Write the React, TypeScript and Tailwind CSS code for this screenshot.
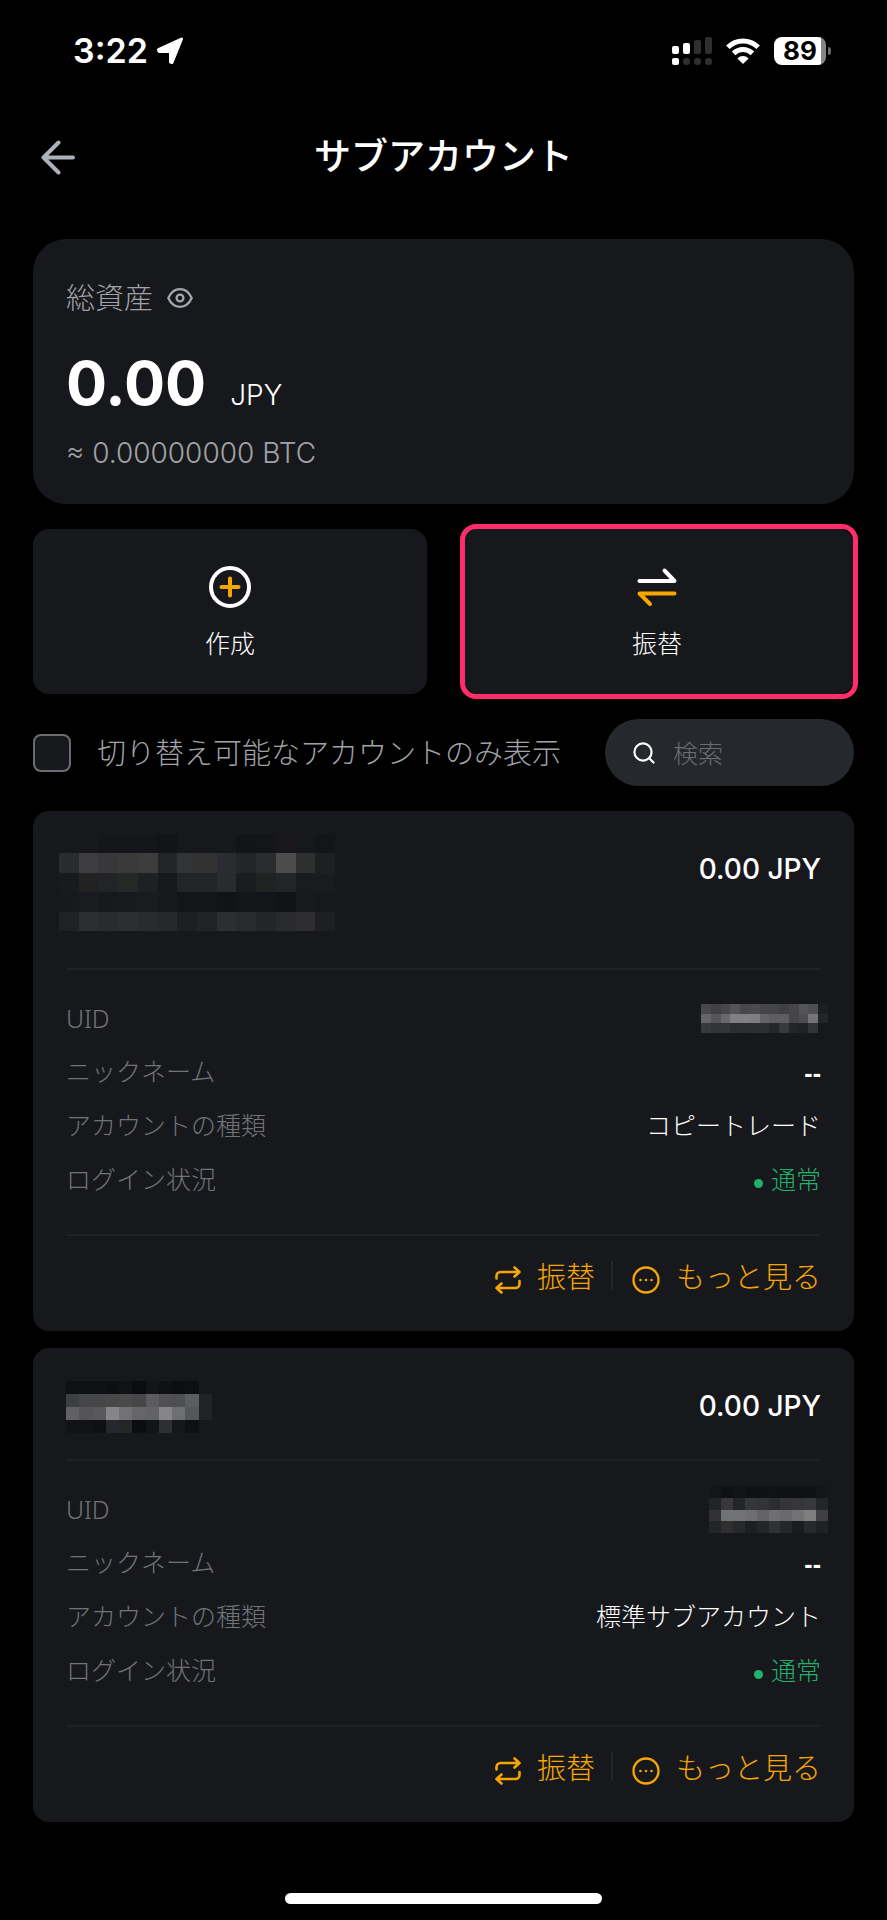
import { useState } from 'react'

type Row = (string | null)[]

// Hidden values, one colour per block
const NAME_LARGE: Row[] = [
  [null, null, '#15161a', '#15161a', '#15161a', '#131418', null, null, null, '#131418', '#141519', '#1a171b', null, '#141519'],
  ['#2a2b2e', '#3e3e40', '#38383a', '#3a3a3b', '#3d3d3e', '#242528', '#323335', '#323232', '#2b2c2f', '#242528', '#2b2c2f', '#4c4c4d', '#2e2f2f', '#1e1f22'],
  ['#191a1d', '#222222', '#232427', '#262727', '#1f2023', '#17181b', '#232427', '#232427', '#2a2b2e', '#1b1c1f', '#212222', '#242528', '#1a1b1e', '#1a1b1e'],
  ['#18191c', '#1a1b1e', '#18191b', '#191a1c', '#1a1b1e', '#18191c', '#141519', '#141519', '#121317', '#151619', '#151619', '#121317', '#191a1d', null],
  ['#202124', '#2c2d30', '#2a2b2e', '#2c2d30', '#2a2b2e', '#27282b', '#1e1f22', '#222326', '#2d2e31', '#292a2d', '#242528', '#292a2d', '#2e2e31', '#1e1f22'],
]

const UID_WIDE: Row[] = [
  ['#48484a', '#414143', '#48484b', '#535456', '#48484b', '#4b4b4e', '#444547', '#444547', '#3f4042', '#464648', '#545557', '#4e4f50', '#1c1d1f'],
  ['#656567', '#555557', '#6a6a6c', '#808082', '#808082', '#7e7e80', '#656567', '#5e5e60', '#5e5e60', '#454547', '#4e4e50', '#747476', '#242528'],
  ['#38393b', '#323336', '#343538', '#2c2d2f', '#2c2d2f', '#2d2e30', '#2d2e30', '#262729', '#38393b', '#242528', '#212224', '#323335', null],
]

const NAME_SMALL: Row[] = [
  ['#101115', '#101115', '#101115', '#0e0f13', '#111216', '#0b0c10', '#141519', '#101115', '#0d0e12', '#0e0f13', null],
  ['#3d3e41', '#454649', '#464648', '#484849', '#4a4a4b', '#464648', '#5c5c5e', '#505052', '#4e4f51', '#5c5d5f', '#222324'],
  ['#616163', '#555557', '#59595b', '#868688', '#717274', '#666668', '#626365', '#868688', '#6e6f71', '#555658', '#222324'],
  ['#121317', '#121317', '#0f1014', '#27282b', '#252626', '#0c0d11', '#141519', '#2e2f32', '#16171b', '#0f1014', null],
]

const UID_SMALL: Row[] = [
  ['#141519', '#101115', '#131418', '#101115', '#101115', '#111216', '#101115', '#101115', '#101115', '#141519'],
  ['#222326', '#38383b', '#242528', '#353638', '#333435', '#2c2d30', '#353538', '#363638', '#38393a', '#242528'],
  ['#323234', '#717274', '#717274', '#6f6f71', '#646466', '#6f6f71', '#6a6a6c', '#717274', '#7f7f80', '#404042'],
  ['#232427', '#302f30', '#27282a', '#1d1e21', '#242528', '#303134', '#252629', '#1a1b1e', '#28292c', '#202124'],
]

const ACCOUNTS = [
  { id: 'copy', name: NAME_LARGE, uid: UID_WIDE, type: 'コピートレード' },
  { id: 'standard', name: NAME_SMALL, uid: UID_SMALL, type: '標準サブアカウント' },
]

const Mosaic: React.FC<{ rows: Row[]; className: string }> = ({ rows, className }) => (
  <svg
    className={className}
    viewBox={`0 0 ${rows[0].length} ${rows.length}`}
    preserveAspectRatio="none"
    shapeRendering="crispEdges"
    aria-hidden="true"
  >
    {rows.map((row, y) =>
      row.map((fill, x) => fill && <rect key={`${x}-${y}`} x={x} y={y} width="1" height="1" fill={fill} />)
    )}
  </svg>
)

const StatusBar = () => (
  <div className="flex h-[102px] items-center justify-between pr-[56px] pl-[73px] font-['Inter','Liberation_Sans',sans-serif]">
    <div className="flex items-center gap-[8px] text-[34px] leading-[40px] font-semibold">
      3:22
      <svg className="size-[28px]" viewBox="0 0 28 28" fill="#fff" stroke="#fff" strokeWidth="3" strokeLinejoin="round">
        <path d="M25.500 2 2.500 12.500 3 14.500H14.500V25L16 25.500Z" />
      </svg>
    </div>
    <div className="flex items-center">
      <svg className="h-[28px] w-[40px]" viewBox="0 0 40 28">
        <g fill="#fff">
          <rect x="0" y="9" width="7" height="8" rx="2" />
          <rect x="11" y="6" width="7" height="11" rx="2" />
          <rect x="0" y="21" width="7" height="7" rx="2" />
        </g>
        <g fill="#2f2f2f">
          <rect x="22" y="3" width="7" height="14" rx="2" />
          <rect x="33" y="0" width="7" height="17" rx="2" />
          <rect x="11" y="21" width="7" height="7" rx="3" />
          <rect x="22" y="21" width="7" height="7" rx="3" />
          <rect x="33" y="21" width="7" height="7" rx="3" />
        </g>
      </svg>
      <svg className="ml-[14px] h-[26px] w-[34px]" viewBox="0 0 34 26" fill="none" stroke="#fff" strokeWidth="5">
        <path d="M1.800 9.300A21.500 21.500 0 0 1 32.200 9.300" />
        <path d="M7.600 15.400A13.500 13.500 0 0 1 26.400 15.400" />
        <path d="M11.400 20.400A8 8 0 0 1 22.600 20.400L17 26Z" fill="#fff" stroke="none" />
      </svg>
      <div className="ml-[14px] flex h-[28px] w-[52px] items-center justify-center rounded-[8px] bg-[linear-gradient(90deg,#fff_90%,#868686_90%)] text-[26px] leading-[28px] font-bold text-black">
        89
      </div>
      <div className="ml-[2px] h-[8px] w-[3px] rounded-r-full bg-[#6d6d6d]" />
    </div>
  </div>
)

const EyeIcon = () => (
  <svg className="h-[20px] w-[26px]" viewBox="0 0 26 20" fill="none" stroke="#a3a7b0" strokeWidth="2.300">
    <path d="M1.300 10C4 4.200 8 1.200 13 1.200S22 4.200 24.700 10C22 15.800 18 18.800 13 18.800S4 15.800 1.300 10Z" strokeLinejoin="round" />
    <circle cx="13" cy="10" r="3.400" />
  </svg>
)

const CreateIcon = () => (
  <svg className="size-[42px]" viewBox="0 0 42 42" fill="none" strokeWidth="4" strokeLinecap="round">
    <circle cx="21" cy="21" r="19" stroke="#fff" />
    <path d="M21 12.500V29.500M12.500 21H29.500" stroke="#f7a600" />
  </svg>
)

const TransferIcon = () => (
  <svg className="size-[42px]" viewBox="0 0 42 42" fill="none" strokeWidth="4" strokeLinecap="round" strokeLinejoin="round">
    <path d="M3.500 15H38.500L28.500 4.500" stroke="#fff" />
    <path d="M38.500 27.500H3.500L14 38" stroke="#f7a600" />
  </svg>
)

const SwapIcon = () => (
  <svg className="mt-[6px] h-[28px] w-[26px]" viewBox="0 0 26 28" fill="none" stroke="#f7a600" strokeWidth="2.600" strokeLinecap="round" strokeLinejoin="round">
    <path d="M1.500 12.500V10A4 4 0 0 1 5.500 6H24.500M19.500 1.500 24.500 6 19.500 10.500" />
    <path d="M24.500 15V18A4 4 0 0 1 20.500 22H1.500M6.500 17.500 1.500 22 6.500 26.500" />
  </svg>
)

const MoreIcon = () => (
  <svg className="mt-[6px] size-[28px]" viewBox="0 0 28 28" fill="none" stroke="#f7a600" strokeWidth="2.300">
    <circle cx="14" cy="14" r="12.500" />
    <g fill="#f7a600" stroke="none">
      <circle cx="8.500" cy="14" r="1.300" />
      <circle cx="14" cy="14" r="1.300" />
      <circle cx="19.500" cy="14" r="1.300" />
    </g>
  </svg>
)

const AccountCard: React.FC<{ account: (typeof ACCOUNTS)[number] }> = ({ account }) => {
  const large = account.id === 'copy'
  return (
    <article className="rounded-[16px] bg-[#17181c] px-[33px]">
      <header
        className={`flex justify-between border-b-2 border-[#202125] ${large ? 'h-[159px]' : 'h-[113px]'}`}
      >
        <Mosaic
          rows={account.name}
          className={large ? '-ml-[7px] mt-[23px] h-[97px] w-[276px]' : 'mt-[33px] h-[52px] w-[146px]'}
        />
        <span className="mt-[38px] font-['Inter'] text-[28px] leading-[40px] font-medium">0.00 JPY</span>
      </header>

      <dl className="pt-[23px] pb-[28px] text-[25px] leading-[54px] text-[#727377]">
        <div className="flex items-center justify-between leading-[51px]">
          <dt>UID</dt>
          <dd>
            <Mosaic
              rows={account.uid}
              className={large ? '-mr-[7px] h-[29px] w-[127px]' : '-mr-[7px] h-[47px] w-[119px]'}
            />
          </dd>
        </div>
        <div className="flex h-[54px] justify-between">
          <dt>ニックネーム</dt>
          <dd className="pt-[2px] font-['Liberation_Sans'] font-bold text-white">--</dd>
        </div>
        <div className="flex justify-between">
          <dt>アカウントの種類</dt>
          <dd className="text-white">{account.type}</dd>
        </div>
        <div className="flex justify-between">
          <dt>ログイン状況</dt>
          <dd className="flex items-center gap-[8px] text-[#20b26c]">
            <span className="mt-[8px] size-[9px] rounded-full bg-[#20b26c]" />
            通常
          </dd>
        </div>
      </dl>

      <footer className="flex h-[97px] items-start justify-end border-t-2 border-[#202125] pt-[19px] text-[29px] leading-[44px] text-[#f7a600]">
        <button className="flex items-center gap-[16px]">
          <SwapIcon />
          振替
        </button>
        <span className="mt-[6px] ml-[16px] h-[29px] w-[2px] bg-[#25262a]" />
        <button className="ml-[19px] flex items-center gap-[16px]">
          <MoreIcon />
          もっと見る
        </button>
      </footer>
    </article>
  )
}

export default function App() {
  const [onlySwitchable, setOnlySwitchable] = useState(false)
  const [query, setQuery] = useState('')

  return (
    <div
      lang="ja"
      className="flex min-h-screen flex-col bg-black font-['Noto_Sans','Noto_Sans_CJK_JP',sans-serif] font-light text-white"
    >
      <StatusBar />

      <header className="grid h-[112px] grid-cols-[1fr_auto_1fr] items-center px-[40px]">
        <button aria-label="戻る" className="w-[36px]">
          <svg className="size-[36px]" viewBox="0 0 36 36" fill="none" stroke="#adb1b8" strokeWidth="4" strokeLinecap="round" strokeLinejoin="round">
            <path d="M18.500 2.500 3.500 17.500 18.500 32.500M3.500 17.500H33" />
          </svg>
        </button>
        <h1 className="pb-[8px] font-['Noto_Sans_CJK_JP'] text-[37px] leading-[48px] font-medium">サブアカウント</h1>
      </header>

      <main className="flex flex-1 flex-col gap-[25px] px-[33px] pt-[25px]">
        <section className="rounded-[33px] bg-[#17181c] px-[33px] pt-[37px] pb-[31px]">
          <div className="flex items-center gap-[14px] text-[29px] leading-[44px] text-[#a1a2a7]">
            総資産
            <EyeIcon />
          </div>
          <div className="mt-[23px] flex items-baseline gap-[24px] font-['Inter']">
            <span className="text-[61px] leading-[80px] font-bold">0.00</span>
            <span className="text-[28px] leading-[40px]">JPY</span>
          </div>
          <div className="mt-[10px] font-['Inter'] text-[28px] leading-[40px] text-[#a1a2a7]">≈ 0.00000000 BTC</div>
        </section>

        <section className="grid grid-cols-2 gap-[33px] text-[25px] leading-[36px]">
          <button className="flex h-[165px] flex-col items-center gap-[17px] rounded-[16px] bg-[#17181c] pt-[37px]">
            <CreateIcon />
            作成
          </button>
          <button className="relative flex h-[165px] flex-col items-center gap-[17px] rounded-[16px] bg-[#17181c] pt-[37px]">
            <TransferIcon />
            振替
            <span className="absolute -inset-y-[5px] -right-[4px] left-0 rounded-[16px] border-5 border-[#ff2d6b]" />
          </button>
        </section>

        <section className="flex items-center justify-between">
          <label className="flex items-center gap-[26px] text-[29px] leading-[44px] whitespace-nowrap text-[#a1a2a7]">
            <input
              type="checkbox"
              checked={onlySwitchable}
              onChange={(e) => setOnlySwitchable(e.target.checked)}
              className="size-[38px] appearance-none rounded-[8px] border-2 border-[#6b6c70] bg-[#17181c] checked:bg-[#f7a600]"
            />
            切り替え可能なアカウントのみ表示
          </label>
          <label className="flex h-[67px] w-[249px] items-center gap-[18px] rounded-full bg-[#25282d] pl-[28px]">
            <svg className="size-[22px] shrink-0" viewBox="0 0 22 22" fill="none" stroke="#fff" strokeWidth="2.200" strokeLinecap="round">
              <circle cx="10" cy="10" r="8.600" />
              <path d="m16.500 16.500 4 4" />
            </svg>
            <input
              type="text"
              aria-label="検索"
              placeholder="検索"
              value={query}
              onChange={(e) => setQuery(e.target.value)}
              className="w-full min-w-0 bg-transparent text-[25px] leading-[36px] outline-none placeholder:text-[#6b6c70]"
            />
          </label>
        </section>

        <section className="flex flex-col gap-[17px]">
          {ACCOUNTS.map((account) => (
            <AccountCard key={account.id} account={account} />
          ))}
        </section>
      </main>

      <div className="mx-auto mt-[20px] mb-[16px] h-[11px] w-[317px] rounded-full bg-white" />
    </div>
  )
}
